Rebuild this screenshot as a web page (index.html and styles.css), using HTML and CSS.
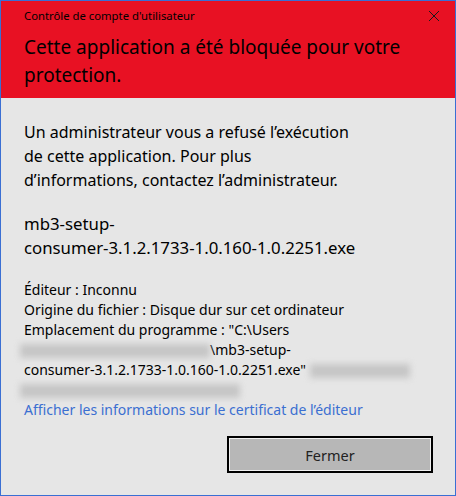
FILE: index.html
```html
<!DOCTYPE html>
<html lang="fr">
  <head>
    <meta charset="UTF-8" />
    <meta name="viewport" content="width=device-width, initial-scale=1.0" />
    <title>Contrôle de compte d'utilisateur</title>
    <link rel="stylesheet" href="styles.css">
  </head>
  <body>
    <div class="dialog">
      <div class="header">
        <div class="titlebar">
          <span class="caption">Contrôle de compte d'utilisateur</span>
          <span class="close">
            <svg width="12" height="12" viewBox="0 0 12 12">
              <path d="M1 1 L11 11 M11 1 L1 11" stroke="#1a1a1a" stroke-width="1" fill="none" />
            </svg>
          </span>
        </div>
        <h1>Cette application a été bloquée pour votre<br />protection.</h1>
      </div>

      <div class="content">
        <p class="message">
          Un administrateur vous a refusé l’exécution<br />
          de cette application. Pour plus<br />
          d’informations, contactez l’administrateur.
        </p>
        <p class="filename">mb3-setup-<br />consumer-3.1.2.1733-1.0.160-1.0.2251.exe</p>

        <div class="details">
          <p>Éditeur : Inconnu</p>
          <p>Origine du fichier : Disque dur sur cet ordinateur</p>
          <p>Emplacement du programme : "C:\Users</p>
          <p><span class="hidden w-190"></span>\mb3-setup-</p>
          <p>consumer-3.1.2.1733-1.0.160-1.0.2251.exe" <span class="hidden w-100"></span></p>
          <p><span class="hidden w-220"></span></p>
          <p><a href="#" class="cert-link">Afficher les informations sur le certificat de l’éditeur</a></p>
        </div>
      </div>

      <div class="actions">
        <button class="close-btn">Fermer</button>
      </div>
    </div>
  </body>
</html>
```

FILE: styles.css
```css
html, body {
  margin: 0;
  padding: 0;
}
body {
  font-family: "Noto Sans", "Open Sans", sans-serif;
  background: #e6e6e6;
}
.dialog {
  width: 456px;
  height: 496px;
  box-sizing: border-box;
  border: 1px solid #3a6fd3;
  background: #e6e6e6;
  display: flex;
  flex-direction: column;
}
.header {
  background: #e81123;
  color: #000;
  padding: 5px 0 9px 23px;
}
.titlebar {
  display: flex;
  justify-content: space-between;
  align-items: center;
  height: 20px;
}
.caption {
  font-size: 11.3px;
  line-height: 20px;
}
.close {
  width: 12px;
  height: 12px;
  margin-right: 15px;
  display: flex;
}
.header h1 {
  margin: 7px 0 0 0;
  font-size: 19px;
  font-weight: normal;
  line-height: 28px;
  white-space: nowrap;
}
.content {
  padding: 22px 0 0 23px;
  color: #000;
}
.message,
.filename {
  margin: 0;
  font-size: 16px;
  line-height: 24px;
  white-space: nowrap;
}
.filename {
  margin-top: 20px;
  font-size: 16.8px;
}
.details {
  margin-top: 20px;
  font-size: 14px;
  line-height: 20px;
}
.details p {
  margin: 0;
  height: 20px;
  white-space: nowrap;
}
.hidden {
  display: inline-block;
  height: 14px;
  vertical-align: middle;
  background: #c6c6c6;
  filter: blur(3px);
}
.w-190 { width: 190px; margin-left: -4px; }
.w-100 { width: 100px; }
.w-220 { width: 220px; margin-left: -4px; }
.cert-link {
  color: #3b6fd1;
  text-decoration: none;
}
.actions {
  display: flex;
  justify-content: flex-end;
  padding: 16px 22px 0 0;
}
.close-btn {
  width: 206px;
  height: 37px;
  box-sizing: border-box;
  border: 2px solid #000;
  box-shadow: inset 0 0 0 1px #f0f0f0;
  background: #b7b7b7;
  color: #222;
  font-family: "Noto Sans", sans-serif;
  font-size: 14.5px;
  padding: 0;
}
```
